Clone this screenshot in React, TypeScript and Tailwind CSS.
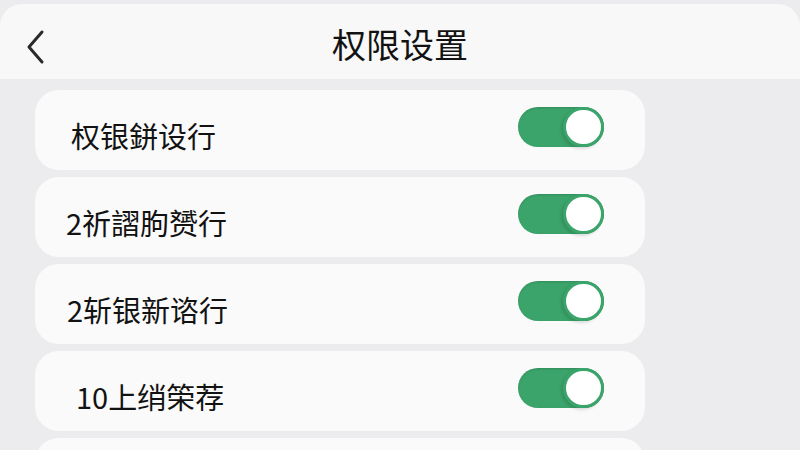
import React from 'react';

const rows = [
  { label: '权银鉼设行', pad: 'pl-[36px]' },
  { label: '2祈謵朐赟行', pad: 'pl-[31px]' },
  { label: '2斩银新谘行', pad: 'pl-[32px]' },
  { label: '10上绡筞荐', pad: 'pl-[41px]' },
  { label: '', pad: 'pl-[36px]' },
];

const Toggle: React.FC = () => (
  <div className="relative w-[86px] h-[40px] rounded-full bg-[#3ba46a] shadow-[inset_0_1px_2px_rgba(0,0,0,0.15)]">
    <div className="absolute right-0 top-0 w-[41px] h-[40px] rounded-full bg-white border-[3px] border-[#3ba46a] shadow-[-2px_2px_3px_rgba(0,0,0,0.12)]" />
  </div>
);

export default function App() {
  return (
    <div
      className="w-[800px] h-[450px] overflow-hidden bg-[#ececee] pt-[4px]"
      style={{ fontFamily: '"Noto Sans CJK SC", "Noto Sans", sans-serif' }}
    >
      {/* header */}
      <div className="h-[75px] rounded-t-[22px] bg-[#f8f8f8] grid grid-cols-[1fr_auto_1fr] items-center">
        <div className="pl-[26px] pt-[10px]">
          <svg width="19" height="36" viewBox="0 0 19 36" fill="none">
            <polyline
              points="16,3 3,18 16,33"
              stroke="#2a2a2a"
              strokeWidth="3"
              strokeLinecap="round"
              strokeLinejoin="round"
            />
          </svg>
        </div>
        <h1 className="text-[34px] text-[#121212] font-normal pt-[4px] leading-none">权限设置</h1>
        <div />
      </div>

      {/* list */}
      <div className="flex flex-col gap-[7px] pt-[11px] pl-[35px]">
        {rows.map((r, i) => (
          <div
            key={i}
            className={`w-[610px] h-[80px] shrink-0 rounded-[24px] bg-[#fafafa] flex items-center justify-between pr-[41px] ${r.pad}`}
          >
            <span className="text-[29px] text-[#121212] pt-[10px] leading-none">{r.label}</span>
            {r.label && (
              <div className="-mt-[6px]">
                <Toggle />
              </div>
            )}
          </div>
        ))}
      </div>
    </div>
  );
}
